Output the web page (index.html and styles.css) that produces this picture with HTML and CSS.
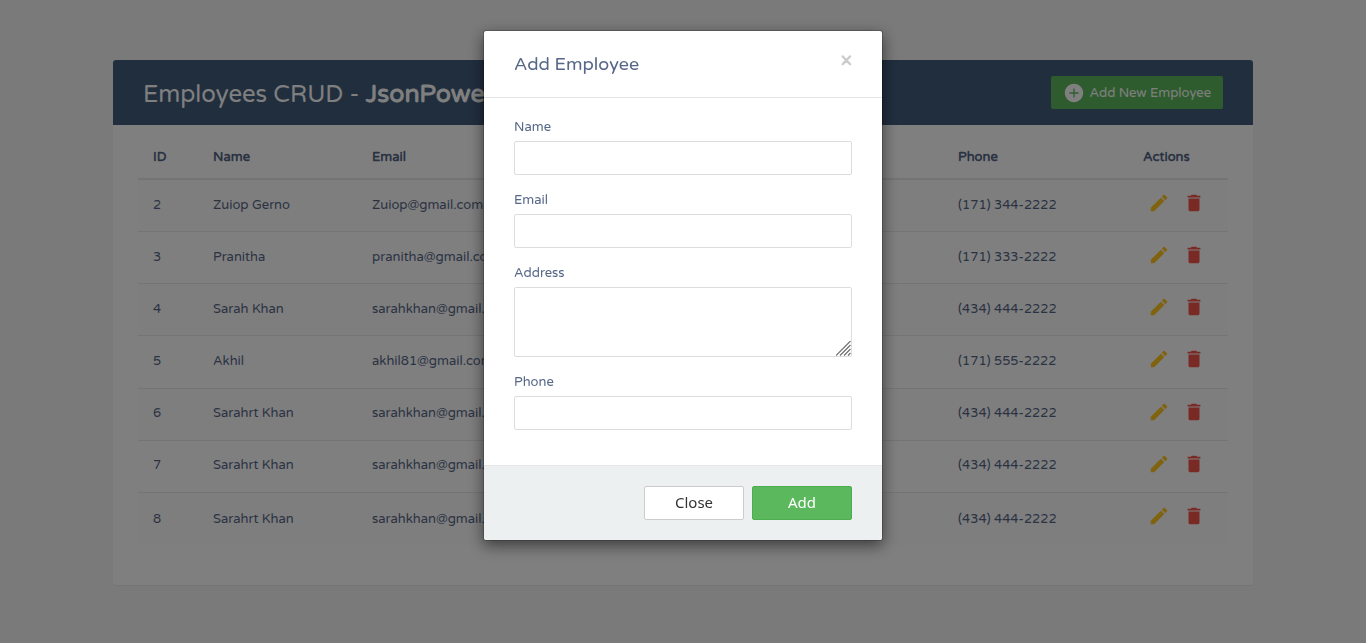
FILE: index.html
```html
<!DOCTYPE html>
<html lang="en">
<head>
<meta charset="utf-8">
<meta name="viewport" content="width=device-width, initial-scale=1">
<title>Employees CRUD</title>
<link rel="stylesheet" href="styles.css">
</head>
<body>
<svg class="sprite" aria-hidden="true">
  <symbol id="icon-add" viewBox="0 0 24 24"><path d="M12 2C6.480 2 2 6.480 2 12s4.480 10 10 10 10-4.480 10-10S17.520 2 12 2zm5 10.700h-4.300v4.300h-1.400v-4.300H7v-1.400h4.300V7h1.400v4.300H17v1.400z"/></symbol>
  <symbol id="icon-edit" viewBox="0 0 24 24"><path d="M3 17.25V21h3.75L17.81 9.94l-3.75-3.75L3 17.25zM20.71 7.04c.39-.39.39-1.02 0-1.41l-2.34-2.34c-.39-.39-1.02-.39-1.41 0l-1.83 1.83 3.75 3.75 1.83-1.83z"/></symbol>
  <symbol id="icon-delete" viewBox="0 0 24 24"><path d="M6 19c0 1.1.9 2 2 2h8c1.1 0 2-.9 2-2V7H6v12zM19 4h-3.500l-1-1h-5l-1 1H5v2h14V4z"/></symbol>
</svg>

<main class="card">
  <header class="card-title">
    <h2>Employees CRUD - <b>JsonPowerDB</b></h2>
    <button type="button" class="btn-new"><svg class="icon"><use href="#icon-add"/></svg><span>Add New Employee</span></button>
  </header>
  <table class="employees">
    <colgroup><col class="col-id"><col class="col-name"><col class="col-email"><col class="col-address"><col class="col-phone"><col class="col-actions"></colgroup>
    <thead>
      <tr><th>ID</th><th>Name</th><th>Email</th><th>Address</th><th>Phone</th><th>Actions</th></tr>
    </thead>
    <tbody>
      <tr><td>2</td><td>Zuiop Gerno</td><td>Zuiop@gmail.com</td><td></td><td>(171) 344-2222</td><td class="actions"><a href="#" class="edit" aria-label="Edit"><svg class="icon"><use href="#icon-edit"/></svg></a><a href="#" class="delete" aria-label="Delete"><svg class="icon"><use href="#icon-delete"/></svg></a></td></tr>
      <tr><td>3</td><td>Pranitha</td><td>pranitha@gmail.com</td><td></td><td>(171) 333-2222</td><td class="actions"><a href="#" class="edit" aria-label="Edit"><svg class="icon"><use href="#icon-edit"/></svg></a><a href="#" class="delete" aria-label="Delete"><svg class="icon"><use href="#icon-delete"/></svg></a></td></tr>
      <tr><td>4</td><td>Sarah Khan</td><td>sarahkhan@gmail.com</td><td></td><td>(434) 444-2222</td><td class="actions"><a href="#" class="edit" aria-label="Edit"><svg class="icon"><use href="#icon-edit"/></svg></a><a href="#" class="delete" aria-label="Delete"><svg class="icon"><use href="#icon-delete"/></svg></a></td></tr>
      <tr><td>5</td><td>Akhil</td><td>akhil81@gmail.com</td><td></td><td>(171) 555-2222</td><td class="actions"><a href="#" class="edit" aria-label="Edit"><svg class="icon"><use href="#icon-edit"/></svg></a><a href="#" class="delete" aria-label="Delete"><svg class="icon"><use href="#icon-delete"/></svg></a></td></tr>
      <tr><td>6</td><td>Sarahrt Khan</td><td>sarahkhan@gmail.com</td><td></td><td>(434) 444-2222</td><td class="actions"><a href="#" class="edit" aria-label="Edit"><svg class="icon"><use href="#icon-edit"/></svg></a><a href="#" class="delete" aria-label="Delete"><svg class="icon"><use href="#icon-delete"/></svg></a></td></tr>
      <tr><td>7</td><td>Sarahrt Khan</td><td>sarahkhan@gmail.com</td><td></td><td>(434) 444-2222</td><td class="actions"><a href="#" class="edit" aria-label="Edit"><svg class="icon"><use href="#icon-edit"/></svg></a><a href="#" class="delete" aria-label="Delete"><svg class="icon"><use href="#icon-delete"/></svg></a></td></tr>
      <tr><td>8</td><td>Sarahrt Khan</td><td>sarahkhan@gmail.com</td><td></td><td>(434) 444-2222</td><td class="actions"><a href="#" class="edit" aria-label="Edit"><svg class="icon"><use href="#icon-edit"/></svg></a><a href="#" class="delete" aria-label="Delete"><svg class="icon"><use href="#icon-delete"/></svg></a></td></tr>
    </tbody>
  </table>
</main>

<div class="overlay">
  <form class="modal" role="dialog" aria-labelledby="modal-title">
    <header class="modal-header">
      <h4 id="modal-title">Add Employee</h4>
      <button type="button" class="modal-close" aria-label="Dismiss">×</button>
    </header>
    <div class="modal-body">
      <div class="field"><label for="name">Name</label><input type="text" id="name"></div>
      <div class="field"><label for="email">Email</label><input type="email" id="email"></div>
      <div class="field"><label for="address">Address</label><textarea id="address"></textarea></div>
      <div class="field"><label for="phone">Phone</label><input type="text" id="phone"></div>
    </div>
    <footer class="modal-footer">
      <button type="button" class="btn btn-default">Close</button>
      <button type="submit" class="btn btn-success">Add</button>
    </footer>
  </form>
</div>
</body>
</html>
```
FILE: styles.css
```css
* { box-sizing: border-box; }

body {
  margin: 0;
  overflow: hidden;
  background: #f5f5f5;
  color: #566787;
  font: 13px/18px "Varela Round", "Noto Sans", sans-serif;
}

button, input, textarea { font-family: inherit; }

.sprite { display: none; }

.icon {
  display: block;
  width: 22px;
  height: 22px;
  fill: currentColor;
}

.card {
  max-width: 1140px;
  margin: 60px auto 30px;
  padding-bottom: 40px;
  background: #fff;
  border-radius: 3px;
  box-shadow: 0 1px 1px rgba(0, 0, 0, .05);
}

.card-title {
  display: flex;
  align-items: center;
  justify-content: space-between;
  padding: 16px 30px;
  background: #435d7d;
  color: #fff;
  border-radius: 3px 3px 0 0;
}

.card-title h2 {
  margin: 0;
  padding-top: 4px;
  font-size: 24px;
  line-height: 29px;
  font-weight: 400;
}

.card-title b {
  font-size: 25px;
  font-weight: 700;
}

.btn-new {
  display: flex;
  align-items: center;
  gap: 4px;
  height: 33px;
  padding: 0 12px;
  border: 0;
  border-radius: 2px;
  background: #5cb85c;
  color: #fff;
  font-size: 13px;
}

.employees {
  width: calc(100% - 50px);
  height: 410px;
  margin: 10px 25px 0;
  table-layout: fixed;
  border-collapse: separate;
  border-spacing: 0;
}

.col-id { width: 60px; }
.col-name { width: 159px; }
.col-email { width: 240px; }
.col-phone { width: 185px; }
.col-actions { width: 100px; }

th, td {
  text-align: left;
  white-space: nowrap;
}

th {
  height: 45px;
  padding: 12px 15px;
  border-bottom: 2px solid #e9e9e9;
}

td {
  height: 52px;
  padding: 12px 15px 14px;
  border-bottom: 1px solid #e9e9e9;
}

tbody tr:last-child td {
  padding-bottom: 12px;
  border-bottom: 0;
}

tbody tr:nth-child(odd) { background: #fcfcfc; }

td.actions { vertical-align: top; }

.actions a {
  display: inline-block;
  vertical-align: top;
  margin: 0 8px 0 5px;
  opacity: .9;
}

.edit { color: #ffc107; }
.delete { color: #f44336; }

.overlay {
  position: fixed;
  inset: 0;
  padding: 30px 10px;
  overflow: auto;
  background: rgba(0, 0, 0, .5);
}

.modal {
  max-width: 400px;
  margin: 0 auto;
  background: #fff;
  background-clip: padding-box;
  border: 1px solid rgba(0, 0, 0, .2);
  border-radius: 3px;
  box-shadow: 0 5px 15px rgba(0, 0, 0, .5);
}

.modal-header {
  display: flex;
  align-items: flex-start;
  justify-content: space-between;
  padding: 20px 30px;
  border-bottom: 1px solid #e5e5e5;
}

.modal-header h4 {
  margin: 0;
  font-size: 18px;
  line-height: 26px;
  font-weight: 400;
}

.modal-close {
  padding: 0;
  border: 0;
  background: none;
  color: #ccc;
  font-size: 20px;
  line-height: 18px;
  font-weight: 700;
}

.modal-body {
  display: flex;
  flex-direction: column;
  gap: 16px;
  padding: 20px 30px 35px;
}

.field {
  display: flex;
  flex-direction: column;
  gap: 5px;
}

.field input, .field textarea {
  width: 100%;
  height: 34px;
  padding: 6px 12px;
  border: 1px solid #ddd;
  border-radius: 2px;
  background: #fff;
  font-size: 14px;
}

.field textarea {
  height: 70px;
  resize: vertical;
}

.field textarea::-webkit-resizer {
  background: url("data:image/svg+xml,%3Csvg xmlns='http://www.w3.org/2000/svg' width='15' height='15'%3E%3Cpath d='M0 14.5L14.500 0M4 14.500L14.500 4M8 14.500L14.500 8M12 14.500L14.500 12' stroke='%23707070' stroke-width='1.2'/%3E%3C/svg%3E") right bottom no-repeat;
}

.modal-footer {
  display: flex;
  justify-content: flex-end;
  gap: 8px;
  padding: 20px 30px;
  background: #ecf0f1;
  border-top: 1px solid #e5e5e5;
  border-radius: 0 0 3px 3px;
}

.btn {
  min-width: 100px;
  height: 34px;
  padding: 0 12px 2px;
  border: 1px solid #ccc;
  border-radius: 2px;
  background: #fff;
  color: #333;
  font-family: "Noto Sans", sans-serif;
  font-size: 15px;
}

.btn-success {
  border-color: #4cae4c;
  background: #5cb85c;
  color: #fff;
}
```
